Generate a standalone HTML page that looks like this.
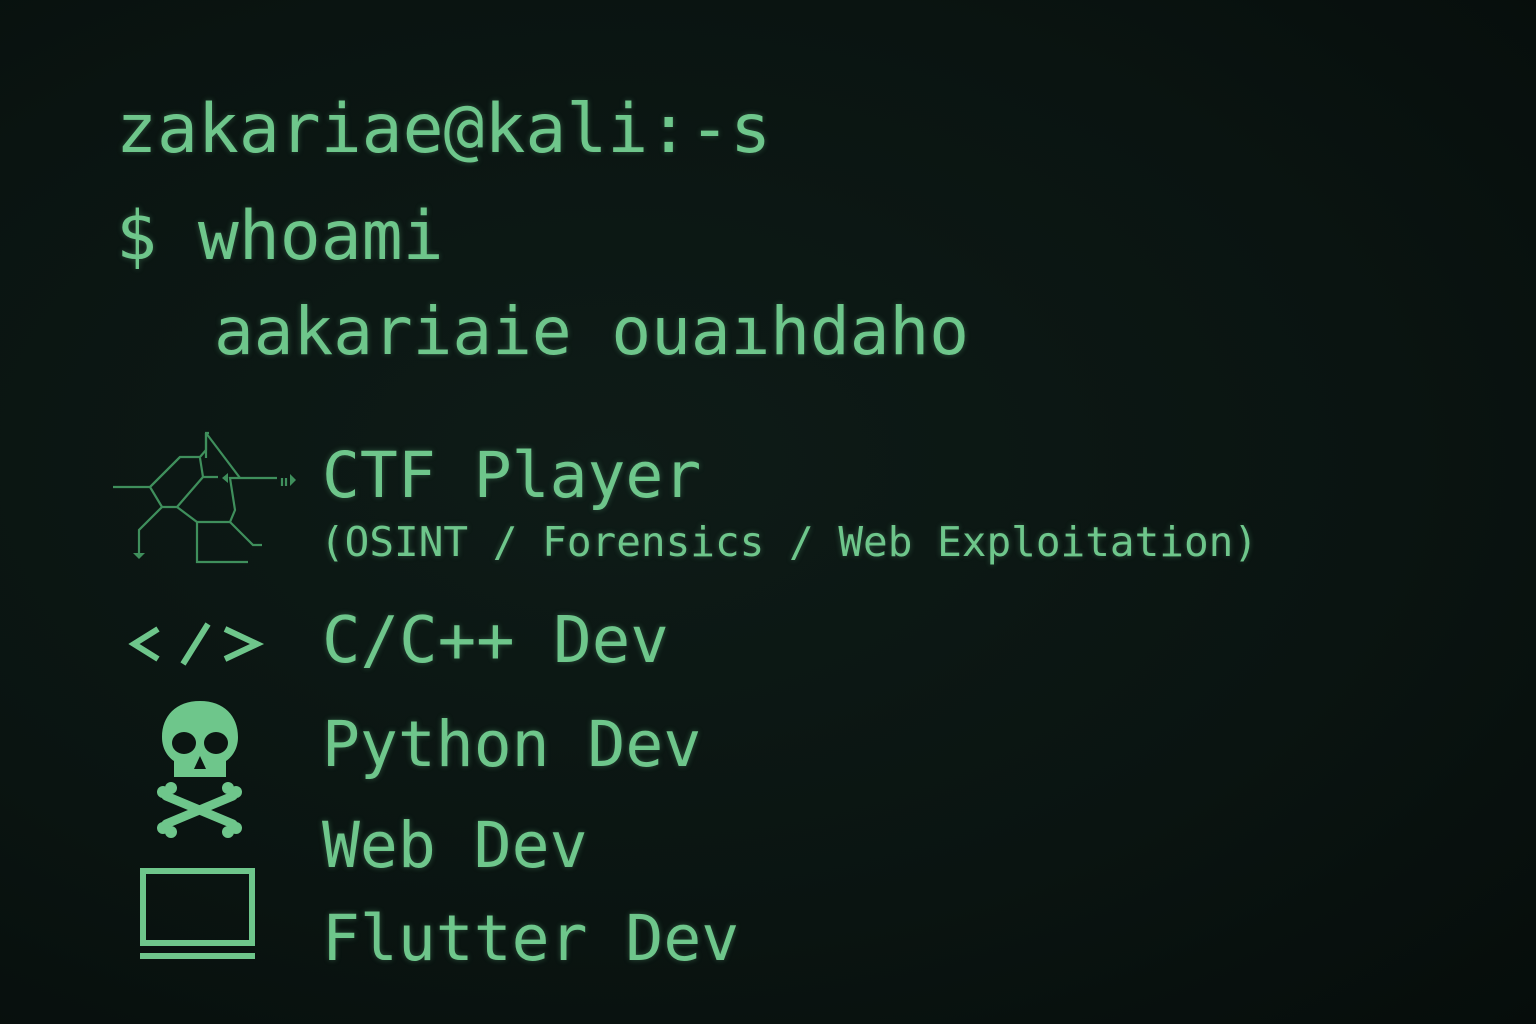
<!DOCTYPE html>
<html><head><meta charset="utf-8"><style>
html,body{margin:0;padding:0}
body{width:1536px;height:1024px;overflow:hidden;background:radial-gradient(ellipse at 40% 45%,#0e1b17 0%,#0a1411 60%,#060d0b 100%);position:relative;font-family:"DejaVu Sans Mono","Liberation Mono",monospace;color:#6ec68b}
.t{position:absolute;white-space:pre;line-height:1;text-shadow:0 0 6px rgba(110,198,139,.35)}
</style></head><body>
<div class="t" style="left:116px;top:96px;font-size:68px">zakariae@kali:-s</div>
<div class="t" style="left:116px;top:203px;font-size:68px">$ whoami</div>
<div class="t" style="left:214px;top:299px;font-size:66px">aakariaie ouaıhdaho</div>
<div class="t" style="left:322px;top:444px;font-size:63px">CTF Player</div>
<div class="t" style="left:320px;top:522px;font-size:41px">(OSINT / Forensics / Web Exploitation)</div>
<div class="t" style="left:322px;top:609px;font-size:64px">C/C++ Dev</div>
<div class="t" style="left:322px;top:713px;font-size:63px">Python Dev</div>
<div class="t" style="left:322px;top:814px;font-size:63px">Web Dev</div>
<div class="t" style="left:322px;top:907px;font-size:63px">Flutter Dev</div>
<svg width="1536" height="1024" style="position:absolute;left:0;top:0" fill="none">
<g stroke="#3f8f5c" stroke-width="2.2">
<path d="M113 487H150L180 457H200L206 450V433H205L209 433"/>
<path d="M206 433V458"/>
<path d="M180 457L150 487L162 507H177L203 477H218"/>
<path d="M200 458L203 477"/>
<path d="M177 507L197 522H230L235 510L230 478L241 478H277"/>
<path d="M206 433L240 478"/>
<path d="M162 507L139 530V553"/>
<path d="M197 522V562H248"/>
<path d="M230 522L253 545H262"/>
<path d="M282 478V486M286 478V486"/>
</g>
<g fill="#3f8f5c"><path d="M133 553H145L139 559Z"/><path d="M228 473V483L222 478Z"/><path d="M290 474L296 480L290 486Z"/></g>
<path d="M158 629L134 644L158 659M183 664L208 624M225 629L257 644L225 659" stroke="#6ec68b" stroke-width="6"/>
<g fill="#6ec68b">
<path d="M200 701C176 701 162 716 162 737C162 749 168 757 174 761V777H226V761C232 757 238 749 238 737C238 716 224 701 200 701Z"/>
<g stroke="#6ec68b" stroke-width="9" stroke-linecap="round"><path d="M166 796L233 824M233 796L166 824"/></g>
<circle cx="163" cy="792" r="6"/><circle cx="171" cy="788" r="6"/><circle cx="236" cy="792" r="6"/><circle cx="228" cy="788" r="6"/>
<circle cx="163" cy="828" r="6"/><circle cx="171" cy="832" r="6"/><circle cx="236" cy="828" r="6"/><circle cx="228" cy="832" r="6"/>
</g>
<g fill="#0b1512"><ellipse cx="184" cy="743" rx="12" ry="11"/><ellipse cx="216" cy="743" rx="12" ry="11"/><path d="M200 756L194 769H206Z"/></g>
<rect x="143" y="871" width="109" height="72" stroke="#6ec68b" stroke-width="6"/>
<rect x="140" y="953" width="115" height="6" fill="#6ec68b"/>
</svg>
</body></html>
